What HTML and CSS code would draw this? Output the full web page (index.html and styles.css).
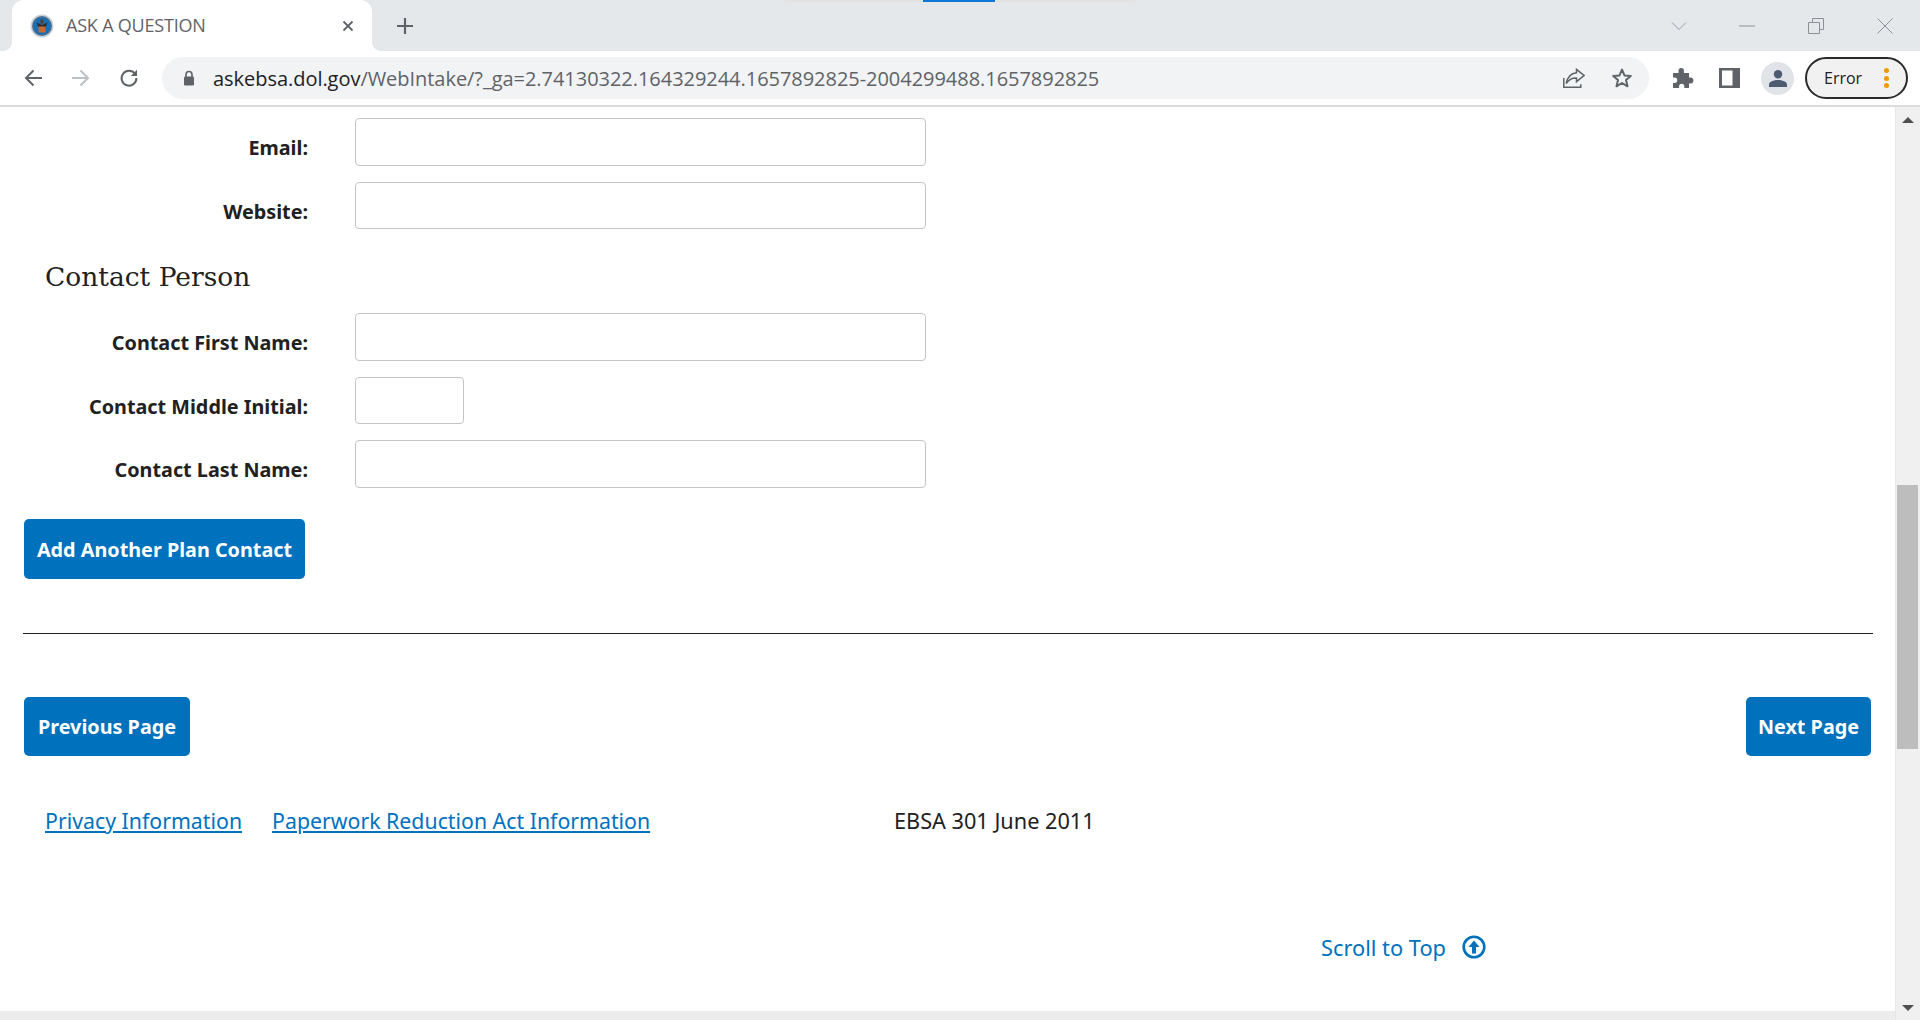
FILE: index.html
```html
<!DOCTYPE html>
<html lang="en">
<head>
<meta charset="utf-8">
<title>ASK A QUESTION</title>
<link rel="stylesheet" href="styles.css">
</head>
<body>
<div class="app">
  <header class="chrome">
    <div class="loadbar"><span class="loadbar-fill"></span></div>
    <div class="tabstrip">
      <div class="tab">
        <svg class="favicon" viewBox="0 0 24 24"><circle cx="12" cy="12" r="11.5" fill="#c9d3dc"/><circle cx="12" cy="12" r="10" fill="#5b6f86"/><circle cx="12" cy="12" r="8.8" fill="#1671b8"/><path d="M6.500 8.500 12 11l5.500-2.500-1.500 4-4 1-4-1z" fill="#3a2c22"/><rect x="8.500" y="12.500" width="7" height="6" rx="1" fill="#c9692f"/><rect x="10.500" y="5.500" width="3" height="4" fill="#5a3d28"/></svg>
        <span class="tab-title">ASK A QUESTION</span>
        <svg class="tab-close" viewBox="0 0 12 12"><path d="M1.500 1.500l9 9M10.500 1.500l-9 9" stroke="#5f6368" stroke-width="1.800" fill="none"/></svg>
      </div>
      <svg class="newtab" viewBox="0 0 18 18"><path d="M9 1v16M1 9h16" stroke="#5f6368" stroke-width="2.200" fill="none"/></svg>
      <div class="winctrls">
        <svg class="wc wc-chev" viewBox="0 0 16 10"><path d="M1 1.500l7 7 7-7" stroke="#9a9ea3" stroke-width="1" fill="none"/></svg>
        <svg class="wc wc-min" viewBox="0 0 16 2"><path d="M0 1h16" stroke="#8d9196" stroke-width="1" fill="none"/></svg>
        <svg class="wc wc-max" viewBox="0 0 16 16"><path d="M.5 4.500h11v11H.5zM4.500 4.500V.5h11v11h-4" stroke="#8d9196" stroke-width="1" fill="none"/></svg>
        <svg class="wc wc-close" viewBox="0 0 16 16"><path d="M.5.500l15 15M15.500.500l-15 15" stroke="#8d9196" stroke-width="1" fill="none"/></svg>
      </div>
    </div>
    <div class="toolbar">
      <div class="navbtns">
        <svg class="ic" viewBox="0 0 20 20"><path d="M19 10H3M10.500 2.500 3 10l7.500 7.500" stroke="#5f6368" stroke-width="2" fill="none"/></svg>
        <svg class="ic" viewBox="0 0 20 20"><path d="M1 10h16M9.500 2.500 17 10l-7.500 7.500" stroke="#bdc1c6" stroke-width="2" fill="none"/></svg>
        <svg class="ic" viewBox="0 0 20 20"><path d="M16.200 6.200A7.400 7.400 0 1 0 17.400 10" stroke="#5f6368" stroke-width="2" fill="none"/><path d="M18 1.800V8h-6.200z" fill="#5f6368"/></svg>
      </div>
      <div class="omnibox">
        <svg class="lock" viewBox="0 0 12 16"><path d="M3 7V4.500a3 3 0 0 1 6 0V7" stroke="#5f6368" stroke-width="1.600" fill="none"/><rect x="1" y="6.500" width="10" height="9" rx="1.300" fill="#5f6368"/></svg>
        <span class="url"><span class="url-host">askebsa.dol.gov</span>/WebIntake/?_ga=2.74130322.164329244.1657892825-2004299488.1657892825</span>
        <svg class="omni-ic share" viewBox="0 0 22 20"><path d="M.8 10v9.200h17v-3" stroke="#5f6368" stroke-width="1.500" fill="none"/><path d="M13.500 1.300 21 7.500l-7.500 6.200V10C9 9.800 5.800 11.500 3.200 15.500 4.300 9.500 8 5.200 13.500 4.700z" stroke="#5f6368" stroke-width="1.500" fill="none"/></svg>
        <svg class="omni-ic star" viewBox="0 0 22 22"><path d="M11 2.600l2.500 5.800 6.300.6-4.800 4.100 1.500 6.200-5.500-3.300-5.500 3.300 1.500-6.200L2.200 9l6.300-.6z" stroke="#5f6368" stroke-width="2" fill="none" stroke-linejoin="round"/></svg>
      </div>
      <div class="tools">
        <svg class="tool puzzle" viewBox="0 0 22 22"><path d="M1 6h5.500V3.700a2.700 2.700 0 0 1 5.400 0V6h5.100v4.600h1.500a2.900 2.900 0 0 1 0 5.800H17V21h-4.700v-1.600a2.600 2.600 0 0 0-5.200 0V21H1v-5h1.500a2.700 2.700 0 0 0 0-5.400H1z" fill="#5f6368"/></svg>
        <svg class="tool panel" viewBox="0 0 21 20"><rect width="21" height="20" fill="#5f6368"/><rect x="3" y="2.500" width="10.500" height="15" fill="#fff"/></svg>
        <span class="avatar"><svg viewBox="0 0 20 20"><circle cx="10" cy="6.300" r="4.200" fill="#4d5a70"/><path d="M1 19v-2.500C1 13.500 6 12 10 12s9 1.500 9 4.500V19z" fill="#4d5a70"/></svg></span>
        <span class="errorpill"><span class="error-text">Error</span><span class="dots"><i></i><i></i><i></i></span></span>
      </div>
    </div>
  </header>

  <div class="viewport">
    <div class="pagecol">
      <main class="page">
        <form class="form">
          <div class="row"><label class="lbl">Email:</label><input class="field" type="text"></div>
          <div class="row"><label class="lbl">Website:</label><input class="field" type="text"></div>
          <h2 class="section-title">Contact Person</h2>
          <div class="row"><label class="lbl">Contact First Name:</label><input class="field" type="text"></div>
          <div class="row"><label class="lbl">Contact Middle Initial:</label><input class="field field-short" type="text"></div>
          <div class="row"><label class="lbl">Contact Last Name:</label><input class="field" type="text"></div>
          <button class="btn btn-add" type="button">Add Another Plan Contact</button>
          <hr class="rule">
          <div class="pager">
            <button class="btn btn-prev" type="button">Previous Page</button>
            <button class="btn btn-next" type="button">Next Page</button>
          </div>
        </form>
        <div class="foot">
          <div class="foot-links">
            <a class="link" href="#">Privacy Information</a>
            <a class="link" href="#">Paperwork Reduction Act Information</a>
          </div>
          <span class="formno">EBSA 301 June 2011</span>
        </div>
        <div class="totop">
          <a class="totop-link" href="#">Scroll to Top</a>
          <svg class="totop-ic" viewBox="0 0 24 24"><circle cx="12" cy="12" r="10.300" stroke="#0071bc" stroke-width="2.600" fill="none"/><path d="M12 5.500 17.500 12H14v6.500h-4V12H6.500z" fill="#0071bc"/></svg>
        </div>
      </main>
      <div class="hscroll"></div>
    </div>
    <aside class="vscroll">
      <span class="arrow arrow-up"></span>
      <div class="track"><div class="thumb"></div></div>
      <span class="arrow arrow-down"></span>
    </aside>
  </div>
</div>
</body>
</html>
```

FILE: styles.css
```css
* { box-sizing: border-box; }
html, body { margin: 0; height: 100%; overflow: hidden; background: #fff; }
body { font-family: "Noto Sans", sans-serif; color: #212121; }
.app { width: 1920px; height: 1020px; display: flex; flex-direction: column; position: relative; }

.chrome { flex: none; height: 107px; display: flex; flex-direction: column; position: relative; border-bottom: 2px solid #dcdcdc; }
.loadbar { position: absolute; left: 785px; top: 0; width: 350px; height: 2px; background: #e2e2e2; }
.loadbar-fill { position: absolute; left: 138px; top: 0; width: 72px; height: 2px; background: #0b78d6; }
.tabstrip { flex: none; height: 51px; background: #e5e8eb; display: flex; align-items: center; padding-left: 12px; }
.tab { width: 360px; height: 51px; background: #fff; border-radius: 12px 12px 0 0; display: flex; align-items: center; padding: 0 18px 0 18px; flex: none; position: relative; }
.tab::before, .tab::after { content: ""; position: absolute; bottom: 0; width: 10px; height: 10px; }
.tab::before { left: -10px; background: radial-gradient(circle at 0 0, transparent 10px, #fff 10.500px); }
.tab::after { right: -10px; background: radial-gradient(circle at 100% 0, transparent 10px, #fff 10.500px); }
.favicon { width: 24px; height: 24px; flex: none; margin-right: 12px; }
.tab-title { font-family: "Open Sans", sans-serif; font-size: 18px; color: #5f6368; letter-spacing: -.2px; flex: 1; white-space: nowrap; padding-bottom: 2px; }
.tab-close { width: 12px; height: 12px; flex: none; }
.newtab { width: 18px; height: 18px; margin-left: 24px; flex: none; }
.winctrls { margin-left: auto; display: flex; align-items: center; padding-right: 27px; }
.wc { display: block; flex: none; width: 16px; }
.wc-chev { height: 10px; margin-right: 52px; }
.wc-min { height: 2px; margin-right: 53px; }
.wc-max { height: 16px; margin-right: 53px; }
.wc-close { height: 16px; }

.toolbar { flex: none; height: 54px; background: #fff; display: flex; align-items: center; padding: 0 0 0 23px; }
.navbtns { display: flex; gap: 28px; width: 139px; flex: none; }
.ic { width: 20px; height: 20px; display: block; flex: none; }
.omnibox { width: 1487px; height: 42px; border-radius: 21px; background: #f1f3f4; display: flex; align-items: center; padding: 0 0 0 21px; flex: none; }
.lock { width: 12px; height: 16px; flex: none; margin-right: 18px; }
.url { font-family: "Open Sans", sans-serif; font-size: 20px; color: #5f6368; white-space: nowrap; letter-spacing: -.04px; width: 1350px; flex: none; }
.url-host { color: #202124; }
.omni-ic { flex: none; display: block; }
.share { width: 22px; height: 20px; }
.star { width: 22px; height: 22px; margin-left: 26px; }
.tools { display: flex; align-items: center; margin-left: 23px; }
.tool { display: block; flex: none; }
.puzzle { width: 22px; height: 22px; }
.panel { width: 21px; height: 20px; margin-left: 25px; }
.avatar { width: 33px; height: 33px; border-radius: 50%; background: #e0e3e8; margin-left: 21px; display: flex; align-items: center; justify-content: center; }
.avatar svg { width: 20px; height: 20px; display: block; }
.errorpill { width: 103px; height: 42px; border: 2px solid #2a2a2a; border-radius: 21px; background: #f1f1f1; margin-left: 11px; display: flex; align-items: center; padding-left: 17px; font-family: "Open Sans", sans-serif; font-size: 16px; color: #202124; }
.error-text { width: 60px; }
.dots { display: flex; flex-direction: column; gap: 2.500px; }
.dots i { width: 5px; height: 5px; border-radius: 50%; background: #f29900; display: block; }

.viewport { flex: 1; min-height: 0; display: flex; }
.pagecol { flex: 1; min-width: 0; display: flex; flex-direction: column; }
.page { flex: 1; min-height: 0; padding: 11px 22px 0 24px; overflow: hidden; }
.row { display: flex; align-items: center; margin-bottom: 16px; }
.lbl { width: 284px; text-align: right; font-size: 19.800px; font-weight: 700; margin-right: 47px; padding-top: 12px; color: #212121; flex: none; white-space: nowrap; }
.field { width: 571px; height: 47.500px; border: 1px solid #c4c4c4; border-radius: 4px; background: #fff; display: block; }
.field-short { width: 109px; }
.section-title { font-family: "DejaVu Serif", serif; font-weight: 400; font-size: 26.500px; margin: 0; padding-left: 21px; height: 68px; line-height: 36px; padding-top: 14px; color: #212121; }
.btn { font-family: "Noto Sans", sans-serif; font-weight: 700; font-size: 19.800px; color: #fff; background: #0071bc; border: 0; border-radius: 5px; height: 59px; padding: 0; display: block; }
.btn-add { width: 281px; height: 60px; margin-top: 31.500px; }
.rule { border: 0; border-top: 1px solid #212121; margin: 54px 0 63px -1px; height: 0; }
.pager { display: flex; justify-content: space-between; padding-right: 2px; }
.btn-prev { width: 166px; }
.btn-next { width: 125px; }
.foot { display: flex; align-items: center; margin-top: 46px; padding-left: 21px; font-size: 21.300px; height: 36px; }
.foot-links { width: 849px; display: flex; gap: 30px; flex: none; }
.link { color: #0071bc; text-decoration: underline; }
.formno { color: #212121; font-size: 21.700px; }
.totop { display: flex; align-items: center; margin-top: 91px; padding-left: 1297px; font-size: 21.800px; height: 36px; }
.totop-link { color: #0071bc; text-decoration: none; width: 141px; flex: none; }
.totop-ic { width: 24px; height: 24px; flex: none; }

.vscroll { flex: none; width: 25px; background: #f0f0f0; border-left: 1px solid #e6e6e6; padding-right: 1px; display: flex; flex-direction: column; align-items: center; }
.arrow { flex: none; width: 0; height: 0; border-left: 6px solid transparent; border-right: 6px solid transparent; }
.arrow-up { border-bottom: 6px solid #505050; margin-top: 10px; }
.arrow-down { border-top: 6px solid #505050; margin-bottom: 9px; }
.track { flex: 1; width: 100%; padding: 362px 1px 0 1px; }
.thumb { height: 264px; background: #bdbdbd; }
.hscroll { flex: none; height: 9px; background: #ececec; }
```
